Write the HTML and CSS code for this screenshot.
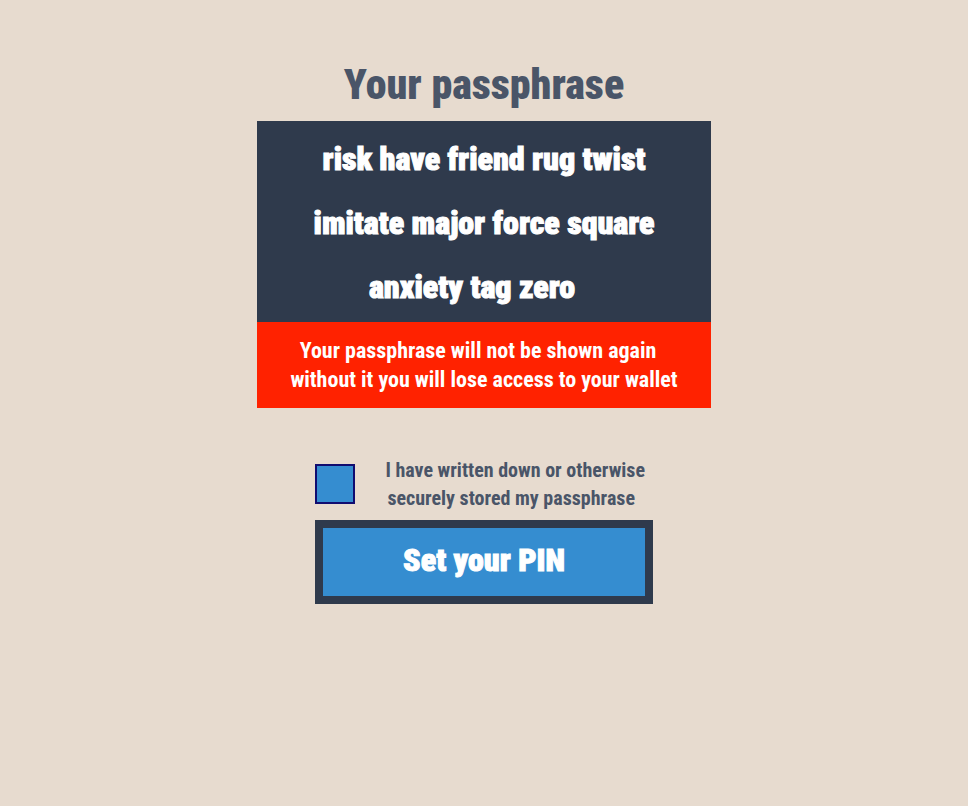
FILE: index.html
```html
<!DOCTYPE html>
<html lang="en">
<head>
<meta charset="utf-8">
<meta name="viewport" content="width=device-width, initial-scale=1">
<title>Your passphrase</title>
<link rel="stylesheet" href="styles.css">
</head>
<body>
<main class="page">
  <h1 class="title">Your passphrase</h1>
  <section class="card">
    <div class="phrase">
      <p class="phrase-line">risk have friend rug twist</p>
      <p class="phrase-line">imitate major force square</p>
      <p class="phrase-line phrase-last">anxiety tag zero</p>
    </div>
    <p class="warning"><span class="warning-line warning-lead">Your passphrase will not be shown again</span> <span class="warning-line">without it you will lose access to your wallet</span></p>
  </section>
  <form class="confirm">
    <div class="agree">
      <input class="agree-box" type="checkbox" id="stored">
      <label class="agree-label" for="stored">I have written down or otherwise<br><span class="agree-end">securely stored my passphrase</span></label>
    </div>
    <button class="submit" type="button">Set your PIN</button>
  </form>
</main>
</body>
</html>
```

FILE: styles.css
```css
* {
  box-sizing: border-box;
}

body {
  margin: 0;
  min-height: 100vh;
  background: #e7dbcf;
  color: #4a5568;
  font-family: "Roboto Condensed", Roboto, sans-serif;
  font-weight: 700;
  text-align: center;
}

.page {
  display: flex;
  flex-direction: column;
  align-items: center;
  padding: 61px 16px;
}

.title {
  margin: 0 0 12px;
  font-size: 42px;
  line-height: 48px;
  font-weight: 900;
}

.card {
  width: 100%;
  max-width: 454px;
  color: #fff;
}

.phrase {
  padding: 6px 0 3px;
  background: #2f3a4c;
}

.phrase-line {
  margin: 0;
  font-size: 32px;
  line-height: 64px;
  font-weight: 900;
  -webkit-text-stroke: 1px;
}

.phrase-last {
  padding-right: 24px;
}

.warning {
  margin: 0;
  padding: 14px 0;
  background: #ff2200;
  font-size: 22px;
  line-height: 29px;
}

.warning-line {
  display: block;
}

.warning-lead {
  padding-right: 12px;
}

.confirm {
  width: 100%;
  max-width: 338px;
  margin-top: 48px;
}

.agree {
  display: flex;
  align-items: center;
  justify-content: space-between;
  padding-right: 8px;
  margin-bottom: 8px;
}

.agree-box {
  appearance: none;
  flex: none;
  width: 40px;
  height: 40px;
  margin: 0;
  border: 2px solid #100c70;
  background: #358dd0;
}

.agree-label {
  font-size: 20px;
  line-height: 28px;
}

.agree-end {
  padding-right: 8px;
}

.submit {
  width: 100%;
  padding: 8px 10px 12px;
  border: 8px solid #2f3a4c;
  background: #358dd0;
  color: #fff;
  font: inherit;
  font-size: 32px;
  line-height: 48px;
  font-weight: 900;
  -webkit-text-stroke: 1px;
}
```
